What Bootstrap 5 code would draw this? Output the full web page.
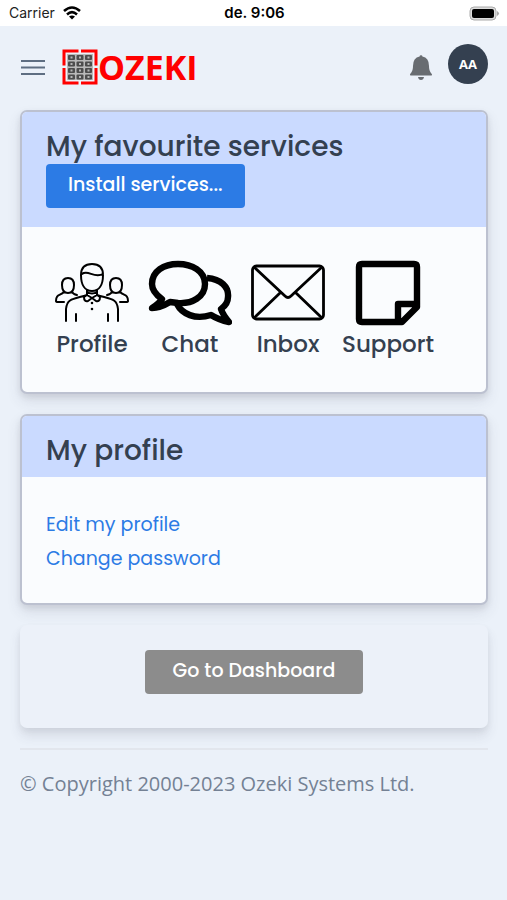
<!DOCTYPE html>
<html lang="en">
<head>
<meta charset="utf-8">
<meta name="viewport" content="width=device-width, initial-scale=1">
<title>Ozeki</title>
<link href="https://cdn.jsdelivr.net/npm/bootstrap@5.3.0/dist/css/bootstrap.min.css" rel="stylesheet">
<style>
  body { background: #ebf1f9; font-family: Poppins, Inter, "Liberation Sans", sans-serif; color: #344050; font-size: 20px; }
  .status-bar { background: #fff; font: 14px/26px Inter, sans-serif; color: #222; padding: 0 7px 0 9px; }
  .status-bar > * { flex: 1 1 0; }
  .status-time { font-size: 15px; font-weight: 600; color: #000; }
  .page { padding: 0 19px 0 20px; }
  .top-bar { height: 84px; padding-bottom: 2px; }
  .menu-btn svg, .status-bar svg, .brand svg, .bell-btn svg { display: block; }
  .brand { margin-left: 16px; color: #f00; font: bold 34px/36px "Open Sans", sans-serif; }
  .bell-btn { margin-right: 15px; }
  .avatar { width: 40px; height: 40px; margin-bottom: 6px; background: #344050; color: #fff; font: bold 13px/40px "Open Sans", sans-serif; }
  .panel { border: 2px solid #bcc1d0; border-radius: 7px; background: #fafcfe; box-shadow: 0 7px 14px rgba(65,69,88,.12), 0 3px 6px rgba(0,0,0,.08); margin-bottom: 20px; }
  .panel-head { background: #cadaff; padding: 18px 24px 9px; border: 0; }
  .panel-head h2 { font-size: 28px; line-height: 34px; font-weight: 500; margin: 0; }
  .action { font-size: 19px; line-height: 28px; font-weight: 500; padding: 7px 22px 9px; border: 0; border-radius: 4px; color: #fff; }
  .install { background: #2c7be5; margin-bottom: 10px; }
  .dash { background: #8c8c8c; padding-left: 28px; padding-right: 28px; }
  .tiles { padding: 31px 21px 32px; }
  .tile { min-width: 98px; padding: 0 5px; color: #344050; font-size: 23px; line-height: 32px; font-weight: 500; }
  .tile svg { height: 70px; }
  .links { padding: 31px 24px 27px; font-size: 19px; line-height: 34px; }
  .links a { color: #2c7be5; }
  .plain { border-color: transparent; background: #ecf1f9; padding: 23px 0 32px; box-shadow: 0 8px 12px rgba(65,69,88,.12), 0 3px 6px rgba(0,0,0,.05); }
  .foot { border-top: 2px solid #e2e6ed; font: 20px/30px "Open Sans", sans-serif; color: #748194; padding: 19px 0; }
</style>
<script src="https://cdn.jsdelivr.net/npm/bootstrap@5.3.0/dist/js/bootstrap.bundle.min.js"></script>
</head>
<body>
<div class="status-bar d-flex align-items-center">
  <div class="d-flex align-items-center gap-2"><span>Carrier</span>
    <svg width="18" height="14" viewBox="0 0 18 14"><g fill="none" stroke="#000" stroke-width="2.6"><path d="M1 5Q9 -2 17 5"/><path d="M4 8.4Q9 4 14 8.4"/></g><path d="M9 13.5L6 10.6Q9 8.2 12 10.6Z"/></svg>
  </div>
  <div class="status-time text-center">de. 9:06</div>
  <div class="d-flex justify-content-end">
    <svg width="31" height="15" viewBox="0 0 31 15"><rect x="1" y="1" width="26" height="13" rx="4" fill="#ddd" stroke="#aaa"/><rect x="3" y="3" width="22" height="9" rx="2"/><path d="M28 5Q32 7.500 28 10Z" fill="#aaa"/></svg>
  </div>
</div>
<div class="page">
  <nav class="top-bar d-flex align-items-center" aria-label="Main">
    <button class="menu-btn btn p-0 border-0" type="button" aria-label="Menu"><svg width="26" height="18" viewBox="0 0 26 18" fill="none" stroke="#5e6e82" stroke-width="2.200"><path d="M1 3H25M1 9.500H25M1 16H25"/></svg></button>
    <a class="brand d-flex align-items-center text-decoration-none" href="#">
      <svg width="36" height="36" viewBox="0 0 36 36">
        <defs><g id="key"><rect width="7" height="5" rx="1" fill="#4c4c4c"/><path d="M2.500 1.500h2v2h-2z" fill="#b5b5b5"/></g></defs>
        <path d="M16.500 2H2V16.500M19 2H34V16.500M2 19V34H16.500M19 34H34V19" fill="none" stroke="#f00" stroke-width="3"/>
        <rect x="5" y="5" width="26" height="26" fill="#b9b9b9"/>
        <use href="#key" x="6" y="6"/><use href="#key" x="14.500" y="6"/><use href="#key" x="23" y="6"/>
        <use href="#key" x="6" y="12.500"/><use href="#key" x="14.500" y="12.500"/><use href="#key" x="23" y="12.500"/>
        <use href="#key" x="6" y="19"/><use href="#key" x="14.500" y="19"/><use href="#key" x="23" y="19"/>
        <use href="#key" x="6" y="25.500"/><use href="#key" x="14.500" y="25.500"/><use href="#key" x="23" y="25.500"/>
      </svg><span>OZEKI</span></a>
    <button class="bell-btn btn p-0 border-0 ms-auto" type="button" aria-label="Notifications"><svg width="24" height="26" viewBox="0 0 24 26" fill="#686c71"><path d="M10.600 2.600a1.400 1.400 0 0 1 2.800 0Q20 4 20 12C20 17.500 22 18.500 23 20.500Q23.500 21.500 22 21.500H2Q.5 21.500 1 20.500C2 18.500 4 17.500 4 12Q4 4 10.600 2.600ZM9 23H15Q14.500 26 12 26T9 23Z"/></svg></button>
    <button class="avatar btn p-0 border-0 rounded-circle" type="button">AA</button>
  </nav>
  <main>
    <section class="panel card">
      <div class="panel-head card-header"><h2>My favourite services</h2><button class="install action btn" type="button">Install services...</button></div>
      <div class="tiles card-body d-flex flex-wrap">
        <a class="tile d-flex flex-column align-items-center text-decoration-none" href="#">
          <svg width="76" viewBox="0 0 76 70" fill="none" stroke="#000" stroke-width="2" stroke-linecap="round" stroke-linejoin="round">
            <path d="M27 17Q27 6 38 6T49 17C49 27 45 33 38 33S27 27 27 17ZM28 16C34 11 40 21 49 16M33 32V37C20 41 13 40 12 51V63M43 32V37C56 41 63 40 64 51V63M22 56V63M54 56V63M33 34Q38 37 43 34M33 37L30 39Q30 44 34 43L38 40L42 43Q46 44 46 39L43 37M33 37L38 40L43 37"/>
            <path d="M8 27Q8 20 14 20T20 27Q20 35 14 35T8 27ZM10 34C6 38 2 36 2 43Q2 44 4 44H10M18 34Q19 36 23 37M56 27Q56 20 62 20T68 27Q68 35 62 35T56 27ZM66 34C70 38 74 36 74 43Q74 44 72 44H66M58 34Q57 36 53 37"/>
            <path d="M38 45V45M38 51V51" stroke-width="2.600"/></svg><span>Profile</span></a>
        <a class="tile d-flex flex-column align-items-center text-decoration-none" href="#">
          <svg width="84" viewBox="0 0 84 70" fill="none" stroke="#000" stroke-width="6.400" stroke-linejoin="round">
            <path d="M59 20C73 21 81 29 80 39Q80 46 73 51Q75 57 81 64Q71 62 63 57C47 62 34 56 29 46"/>
            <path d="M14 41Q4 34 4 26C4 13 16 6 30 6S57 13 57 26S44 46 30 45L22 44Q12 50 4 50Q11 46 14 41Z"/></svg><span>Chat</span></a>
        <a class="tile d-flex flex-column align-items-center text-decoration-none" href="#">
          <svg width="76" viewBox="0 0 76 70" fill="none" stroke="#000" stroke-width="2.800" stroke-linejoin="round">
            <rect x="2.500" y="8" width="71" height="53" rx="4"/><path d="M4 9L35 38Q38 41 41 38L72 9M4 60L31 34M72 60L45 34"/></svg><span>Inbox</span></a>
        <a class="tile d-flex flex-column align-items-center text-decoration-none" href="#">
          <svg width="66" viewBox="0 0 66 70" fill="none" stroke="#000" stroke-width="6.400" stroke-linejoin="round">
            <path d="M7 6H59Q62 6 62 9V49L47 64H7Q4 64 4 61V9Q4 6 7 6ZM62 46H43V64"/></svg><span>Support</span></a>
      </div>
    </section>
    <section class="panel card">
      <div class="panel-head card-header"><h2>My profile</h2></div>
      <div class="links card-body d-flex flex-column align-items-start"><a class="text-decoration-none" href="#">Edit my profile</a><a class="text-decoration-none" href="#">Change password</a></div>
    </section>
    <section class="panel plain card align-items-center"><button class="dash action btn" type="button">Go to Dashboard</button></section>
  </main>
  <footer class="foot">© Copyright 2000-2023 Ozeki Systems Ltd.</footer>
</div>
</body>
</html>
